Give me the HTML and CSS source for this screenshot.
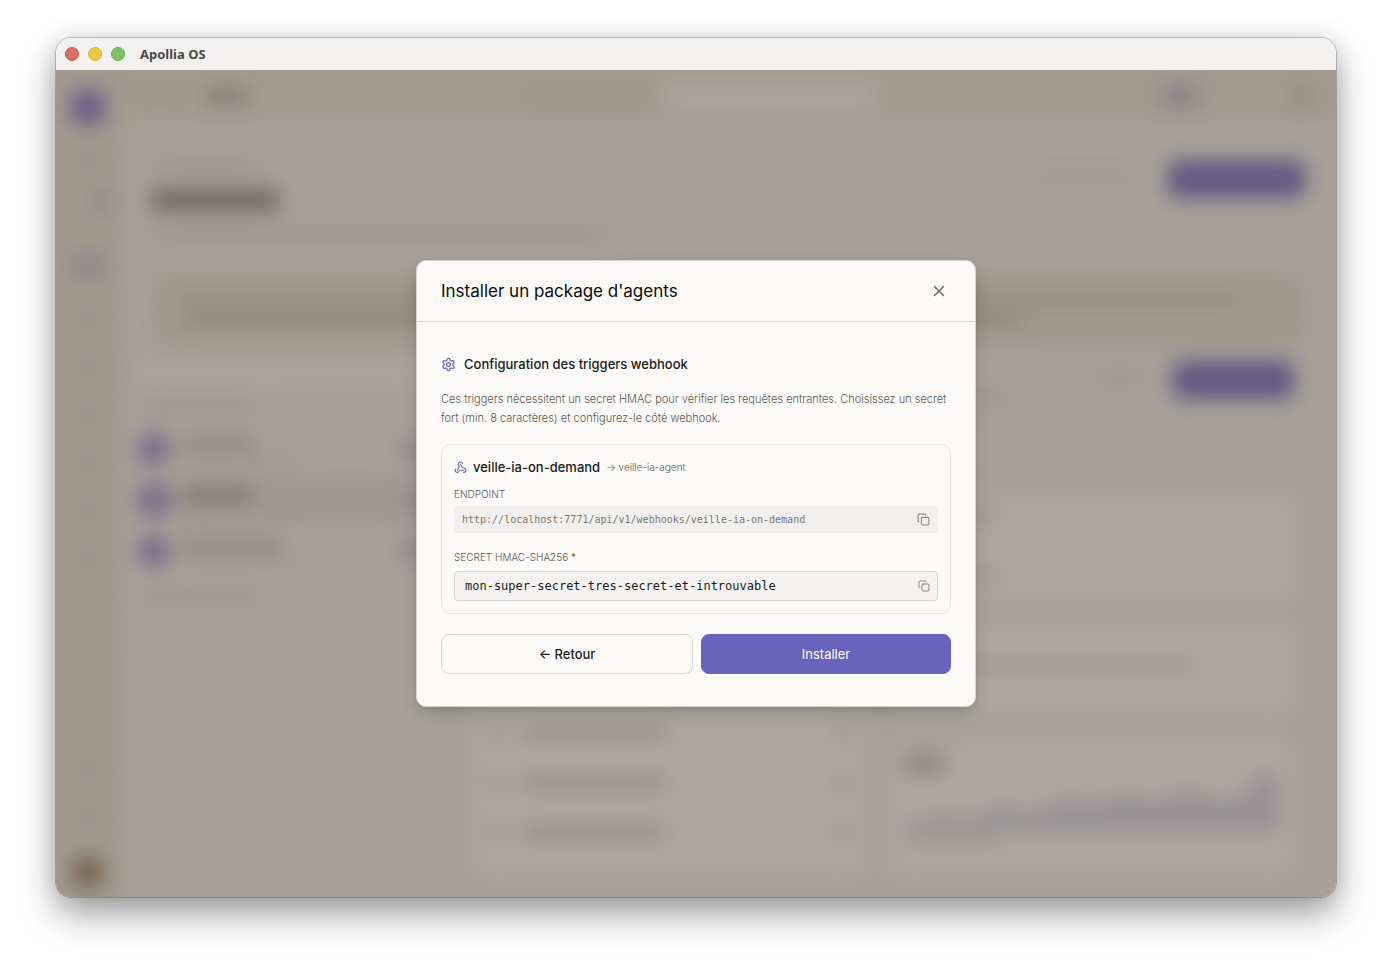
FILE: index.html
```html
<!DOCTYPE html>
<html lang="fr">
<head>
<meta charset="utf-8">
<title>Apollia OS</title>
<link rel="stylesheet" href="styles.css">
</head>
<body>
<div class="window">
  <header class="titlebar">
    <span class="light light-close"></span>
    <span class="light light-min"></span>
    <span class="light light-max"></span>
    <span class="window-title">Apollia OS</span>
  </header>
  <div class="stage">
    <div class="app" aria-hidden="true">
      <div class="rail">
        <i class="logo"></i>
        <i class="dot"></i>
        <i class="dot badge"></i>
        <i class="dot active"></i>
        <i class="dot"></i>
        <i class="dot"></i>
        <i class="dot"></i>
        <i class="dot"></i>
        <i class="dot"></i>
        <i class="dot"></i>
        <i class="dot foot"></i>
        <i class="dot"></i>
        <i class="avatar"></i>
      </div>
      <div class="main">
        <div class="topbar">
          <i class="bar crumb"></i>
          <i class="bar crumb-current"></i>
          <i class="bar search-label"></i>
          <i class="search"></i>
          <i class="bar pill"></i>
          <i class="bar more"></i>
        </div>
        <div class="page">
          <div class="page-head">
            <div class="heading">
              <i class="bar eyebrow"></i>
              <i class="bar title"></i>
              <i class="bar subtitle"></i>
            </div>
            <i class="bar link"></i>
            <i class="cta"></i>
          </div>
          <div class="banner">
            <i class="bar line-long"></i>
            <i class="bar line-short"></i>
          </div>
          <div class="columns">
            <div class="list">
              <i class="field"></i>
              <i class="bar group"></i>
              <div class="item"><i class="face"></i><span class="names"><i class="bar name"></i><i class="bar meta"></i></span><i class="bar status"></i></div>
              <div class="item selected"><i class="face"></i><span class="names"><i class="bar name"></i><i class="bar meta"></i></span><i class="bar status"></i></div>
              <div class="item"><i class="face"></i><span class="names"><i class="bar name wide"></i><i class="bar meta"></i></span><i class="bar status"></i></div>
              <i class="bar group"></i>
              <i class="bar group faint"></i>
            </div>
            <div class="detail">
              <div class="detail-head"><i class="bar note"></i><i class="bar ghost"></i><i class="cta small"></i></div>
              <div class="cards">
                <div class="card tall">
                  <div class="row"><i class="bar tick"></i><i class="bar name long"></i><i class="bar tick last"></i></div>
                  <div class="row"><i class="bar tick"></i><i class="bar name long"></i><i class="bar tick last"></i></div>
                  <div class="row"><i class="bar tick"></i><i class="bar name long"></i><i class="bar tick last"></i></div>
                </div>
                <div class="stack">
                  <div class="card first"><i class="bar tag"></i><i class="bar tag"></i></div>
                  <div class="card second"><i class="bar sentence"></i></div>
                  <div class="card third">
                    <i class="bar chart-title"></i>
                    <svg class="chart" viewBox="0 0 370 60" preserveAspectRatio="none"><path d="M0 60V53L40 43L70 48L95 34L125 42L160 27L190 32L220 20L250 29L280 17L315 28L345 18V0H370V60Z"/></svg>
                    <i class="bar legend"></i>
                  </div>
                </div>
              </div>
            </div>
          </div>
        </div>
      </div>
    </div>
    <div class="overlay">
      <section class="dialog" role="dialog" aria-modal="true" aria-labelledby="dialog-title">
        <header class="dialog-head">
          <h1 id="dialog-title">Installer un package d'agents</h1>
          <button class="icon-button close" type="button" aria-label="Fermer">
            <svg viewBox="0 0 24 24" width="18" height="18"><path d="M18 6 6 18M6 6l12 12"/></svg>
          </button>
        </header>
        <form class="dialog-body">
          <h2>
            <svg class="accent" viewBox="0 0 24 24" width="15" height="15"><path d="M9.671 4.136a2.34 2.34 0 0 1 4.659 0 2.34 2.34 0 0 0 3.319 1.915 2.34 2.34 0 0 1 2.33 4.033 2.34 2.34 0 0 0 0 3.831 2.34 2.34 0 0 1-2.33 4.033 2.34 2.34 0 0 0-3.319 1.915 2.34 2.34 0 0 1-4.659 0 2.34 2.34 0 0 0-3.32-1.915 2.34 2.34 0 0 1-2.33-4.033 2.34 2.34 0 0 0 0-3.831A2.34 2.34 0 0 1 6.35 6.051a2.34 2.34 0 0 0 3.319-1.915"/><circle cx="12" cy="12" r="3"/></svg>
            Configuration des triggers webhook
          </h2>
          <p class="intro">Ces triggers nécessitent un secret HMAC pour vérifier les requêtes entrantes. Choisissez un secret fort (min. 8 caractères) et configurez-le côté webhook.</p>
          <div class="trigger">
            <div class="trigger-head">
              <svg class="accent" viewBox="0 0 24 24" width="13" height="13"><path d="M18 16.98h-5.99c-1.1 0-1.95.94-2.48 1.9A4 4 0 0 1 2 17c.01-.7.2-1.4.57-2"/><path d="m6 17 3.13-5.78c.53-.97.1-2.18-.5-3.1a4 4 0 1 1 6.89-4.06"/><path d="m12 6 3.13 5.73C15.66 12.7 16.9 13 18 13a4 4 0 0 1 0 8"/></svg>
              <span class="trigger-name">veille-ia-on-demand</span>
              <span class="trigger-agent">→ veille-ia-agent</span>
            </div>
            <span class="label">ENDPOINT</span>
            <div class="endpoint">
              <code>http://localhost:7771/api/v1/webhooks/veille-ia-on-demand</code>
              <button class="icon-button" type="button" aria-label="Copier l'endpoint">
                <svg viewBox="0 0 24 24" width="13" height="13"><rect x="8" y="8" width="14" height="14" rx="2"/><path d="M4 16c-1.100 0-2-.9-2-2V4c0-1.100.9-2 2-2h10c1.100 0 2 .9 2 2"/></svg>
              </button>
            </div>
            <label class="label" for="secret">SECRET HMAC-SHA256 <span class="required">*</span></label>
            <div class="secret">
              <input id="secret" type="text" value="mon-super-secret-tres-secret-et-introuvable">
              <button class="icon-button" type="button" aria-label="Copier le secret">
                <svg viewBox="0 0 24 24" width="12" height="12"><rect x="8" y="8" width="14" height="14" rx="2"/><path d="M4 16c-1.100 0-2-.9-2-2V4c0-1.100.9-2 2-2h10c1.100 0 2 .9 2 2"/></svg>
              </button>
            </div>
          </div>
          <div class="actions">
            <button class="button secondary" type="button">← Retour</button>
            <button class="button primary" type="submit">Installer</button>
          </div>
        </form>
      </section>
    </div>
  </div>
</div>
</body>
</html>
```
FILE: styles.css
```css
* { box-sizing: border-box; }

body {
  margin: 0;
  min-height: 100vh;
  padding: 38px 56px 74px;
  display: flex;
  background: #fff;
  font-family: Inter, "Liberation Sans", sans-serif;
  color: #1b1a18;
}

button, input { font: inherit; color: inherit; }

.window {
  flex: 1;
  display: flex;
  flex-direction: column;
  border-radius: 15px;
  overflow: hidden;
  box-shadow: 0 0 0 1px rgba(0, 0, 0, .2), 0 18px 36px rgba(0, 0, 0, .36), 0 0 24px rgba(0, 0, 0, .12);
}

.titlebar {
  height: 32px;
  display: flex;
  align-items: center;
  gap: 9px;
  padding: 0 9px;
  background: #f3f1ef;
}
.light { width: 14px; height: 14px; border-radius: 50%; border: 1px solid; }
.light-close { background: #d76f62; border-color: #c9503f; }
.light-min { background: #e4ca46; border-color: #d9b722; }
.light-max { background: #80c069; border-color: #5fae45; }
.window-title {
  margin-left: 6px;
  font: 700 13px/16px "Noto Sans", sans-serif;
  color: #4a4947;
}

.stage { flex: 1; display: grid; background: #a6a199; overflow: hidden; }
.app, .overlay { grid-area: 1 / 1; }

/* Application behind the dialog */
.app {
  display: grid;
  grid-template-columns: 68px 1fr;
  filter: blur(10px);
  margin: -30px;
  padding: 30px;
  background: linear-gradient(90deg, #9f998d 96px, transparent 96px), linear-gradient(#a29b8f 83px, transparent 83px);
}
.app i { display: block; flex: none; }
.bar { height: 12px; border-radius: 6px; background: #9b958d; }

.rail { display: flex; flex-direction: column; align-items: center; padding: 20px 4px 8px 0; gap: 28px; }
.logo { width: 34px; height: 34px; border-radius: 10px; background: #6a5c88; }
.dot { width: 20px; height: 20px; border-radius: 10px; background: #96928a; }
.dot.badge { align-self: flex-end; margin: -8px 8px 0 0; background: #8a8588; }
.dot.active { width: 44px; height: 28px; margin-top: 12px; background: #928c8d; }
.dot.foot { margin-top: auto; }
.avatar { width: 34px; height: 34px; border-radius: 50%; background: #7c6653; }

.main { display: flex; flex-direction: column; min-width: 0; }
.topbar { height: 51px; display: flex; align-items: center; padding: 0 24px 0 12px; margin-bottom: 2px; }
.crumb { width: 48px; background: #9a9587; }
.crumb-current { width: 44px; height: 18px; margin-left: 20px; background: #858177; }
.search-label { width: 130px; margin-left: auto; background: #9c968d; }
.search { width: 214px; height: 32px; margin-left: 10px; border-radius: 8px; background: #aaa49b; }
.pill { width: 40px; height: 24px; margin-left: 284px; border-radius: 12px; background: #89838a; }
.more { width: 20px; margin-left: 92px; height: 20px; background: #918d81; }

.page { flex: 1; display: flex; flex-direction: column; padding: 35px 12px 0; }
.page-head { display: flex; align-items: flex-start; padding: 0 19px 0 14px; height: 115px; }
.heading { flex: 1; display: flex; flex-direction: column; gap: 15px; padding-top: 3px; }
.eyebrow { width: 115px; }
.title { width: 130px; height: 24px; background: #746e66; }
.subtitle { width: 460px; }
.link { width: 120px; margin: 15px 24px 0 0; background: #9f9992; }
.cta { width: 137px; height: 38px; margin-top: 2px; border-radius: 8px; background: #625a82; }

.banner {
  display: flex;
  flex-direction: column;
  gap: 8px;
  margin: 0 19px 0 16px;
  padding: 20px 70px 20px 28px;
  border-radius: 10px;
  background: #a0998d;
}
.line-long { height: 12px; background: #948b7a; }
.line-short { width: 80%; height: 14px; background: #938976; }

.columns { flex: 1; display: grid; grid-template-columns: 304px 1fr; }
.list { display: flex; flex-direction: column; border-right: 2px solid #a09a92; padding-top: 12px; }
.field { width: 280px; height: 28px; background: #a9a49c; }
.group { width: 120px; margin: 14px 4px 10px; background: #9c958e; }
.group.faint { background: #a09a93; }
.item { display: flex; align-items: center; gap: 12px; height: 51px; padding: 0 2px; }
.item.selected { background: #9f9994; }
.face { width: 32px; height: 32px; border-radius: 50%; background: #75698a; }
.names { flex: 1; display: flex; flex-direction: column; gap: 3px; }
.name { width: 72px; height: 15px; background: #8e8981; }
.selected .name { background: #7f7a74; }
.name.wide { width: 100px; }
.meta { width: 120px; height: 8px; }
.status { width: 40px; height: 22px; background: #959089; }

.detail { display: flex; flex-direction: column; padding: 14px 30px 22px 34px; }
.detail-head { display: flex; align-items: flex-start; height: 84px; }
.note { width: 540px; margin-top: 32px; margin-right: auto; }
.ghost { width: 50px; margin: 10px 28px 0 0; }
.cta.small { width: 122px; margin: 0; }
.cards { flex: 1; display: grid; grid-template-columns: 390fr 404fr; gap: 20px; }
.card { border-radius: 10px; background: #aba69e; }
.tall { display: flex; flex-direction: column; justify-content: flex-end; gap: 32px; padding: 36px 14px 34px; }
.row { display: flex; align-items: center; gap: 14px; height: 18px; }
.tick { width: 20px; height: 14px; background: #9d9795; }
.tick.last { margin-left: auto; }
.name.long { width: 145px; background: #97918a; }
.stack { display: flex; flex-direction: column; gap: 24px; padding-top: 50px; }
.first { height: 104px; padding: 14px 20px; }
.tag { width: 90px; margin-bottom: 48px; }
.second { height: 92px; padding: 36px 0; }
.sentence { width: 310px; background: #9e9991; }
.third { flex: 1; padding: 14px 16px; display: flex; flex-direction: column; }
.chart-title { width: 42px; height: 20px; background: #8b867d; }
.chart { width: 100%; height: 56px; margin-top: 2px; fill: #979196; }
.legend { width: 100px; margin-top: 4px; background: #a19b94; }

/* Dialog */
.overlay { display: grid; place-items: center; z-index: 1; }
.dialog {
  width: 560px;
  max-width: 100%;
  border: 1px solid #d5d3ce;
  border-radius: 10px;
  background: #fbfaf8;
  box-shadow: 0 8px 20px -4px rgba(0, 0, 0, .18), 0 2px 6px rgba(0, 0, 0, .08);
}
.dialog-head {
  display: flex;
  align-items: center;
  justify-content: space-between;
  height: 61px;
  padding: 0 24px;
  border-bottom: 1px solid #d5d4d1;
}
h1 { margin: 0; font-size: 17px; line-height: 28px; font-weight: 400; color: #0c0b0a; }
svg { fill: none; stroke: currentColor; stroke-width: 2; stroke-linecap: round; stroke-linejoin: round; flex: none; display: block; }
.chart { stroke: none; }
.icon-button { border: 0; padding: 0; background: none; color: #8b877d; }
.close { padding: 3px; color: #6f6b62; }
.accent { color: #6863bb; }

.dialog-body { padding: 32px 24px; }
h2 {
  display: flex;
  align-items: center;
  gap: 8px;
  margin: 0 0 16px;
  font-size: 13px;
  line-height: 20px;
  font-weight: 500;
}
.intro { margin: 0 0 16px; font-size: 11px; line-height: 19px; font-weight: 300; color: #5b574e; }

.trigger { display: flex; flex-direction: column; padding: 12px; border: 1px solid #e5e4e1; border-radius: 10px; }
.trigger-head { display: flex; align-items: center; gap: 6px; margin-bottom: 9px; line-height: 20px; }
.trigger-name { font-size: 13px; font-weight: 500; }
.trigger-agent { font-size: 10px; font-weight: 300; color: #5b574e; }
.label { margin-bottom: 4px; font-size: 10px; line-height: 16px; font-weight: 300; color: #5b574e; }
.required { font-weight: 400; color: #a84a36; }
.endpoint {
  display: flex;
  align-items: center;
  justify-content: space-between;
  height: 27px;
  margin-bottom: 16px;
  padding: 0 8px;
  border-radius: 4px;
  background: #f1f0ee;
}
code { font: 10px/17px "DejaVu Sans Mono", monospace; color: #7b776d; }
.label[for] { margin-bottom: 6px; }
.secret {
  display: flex;
  align-items: center;
  height: 30px;
  padding: 0 7px 0 10px;
  border: 1px solid #d5d4d1;
  border-radius: 4px;
  background: #f3f2f0;
}
.secret input {
  flex: 1;
  min-width: 0;
  padding: 0;
  border: 0;
  outline: 0;
  background: none;
  font: 12px/16px "DejaVu Sans Mono", monospace;
}

.actions { display: grid; grid-template-columns: 252fr 250fr; gap: 8px; margin-top: 20px; }
.button { height: 40px; border: 1px solid #d5d4d1; border-radius: 8px; font-size: 13px; line-height: 20px; font-weight: 500; background: #fbfaf8; }
.primary { border-color: #6863bb; background: #6863bb; color: #fff; font-weight: 400; }
```
